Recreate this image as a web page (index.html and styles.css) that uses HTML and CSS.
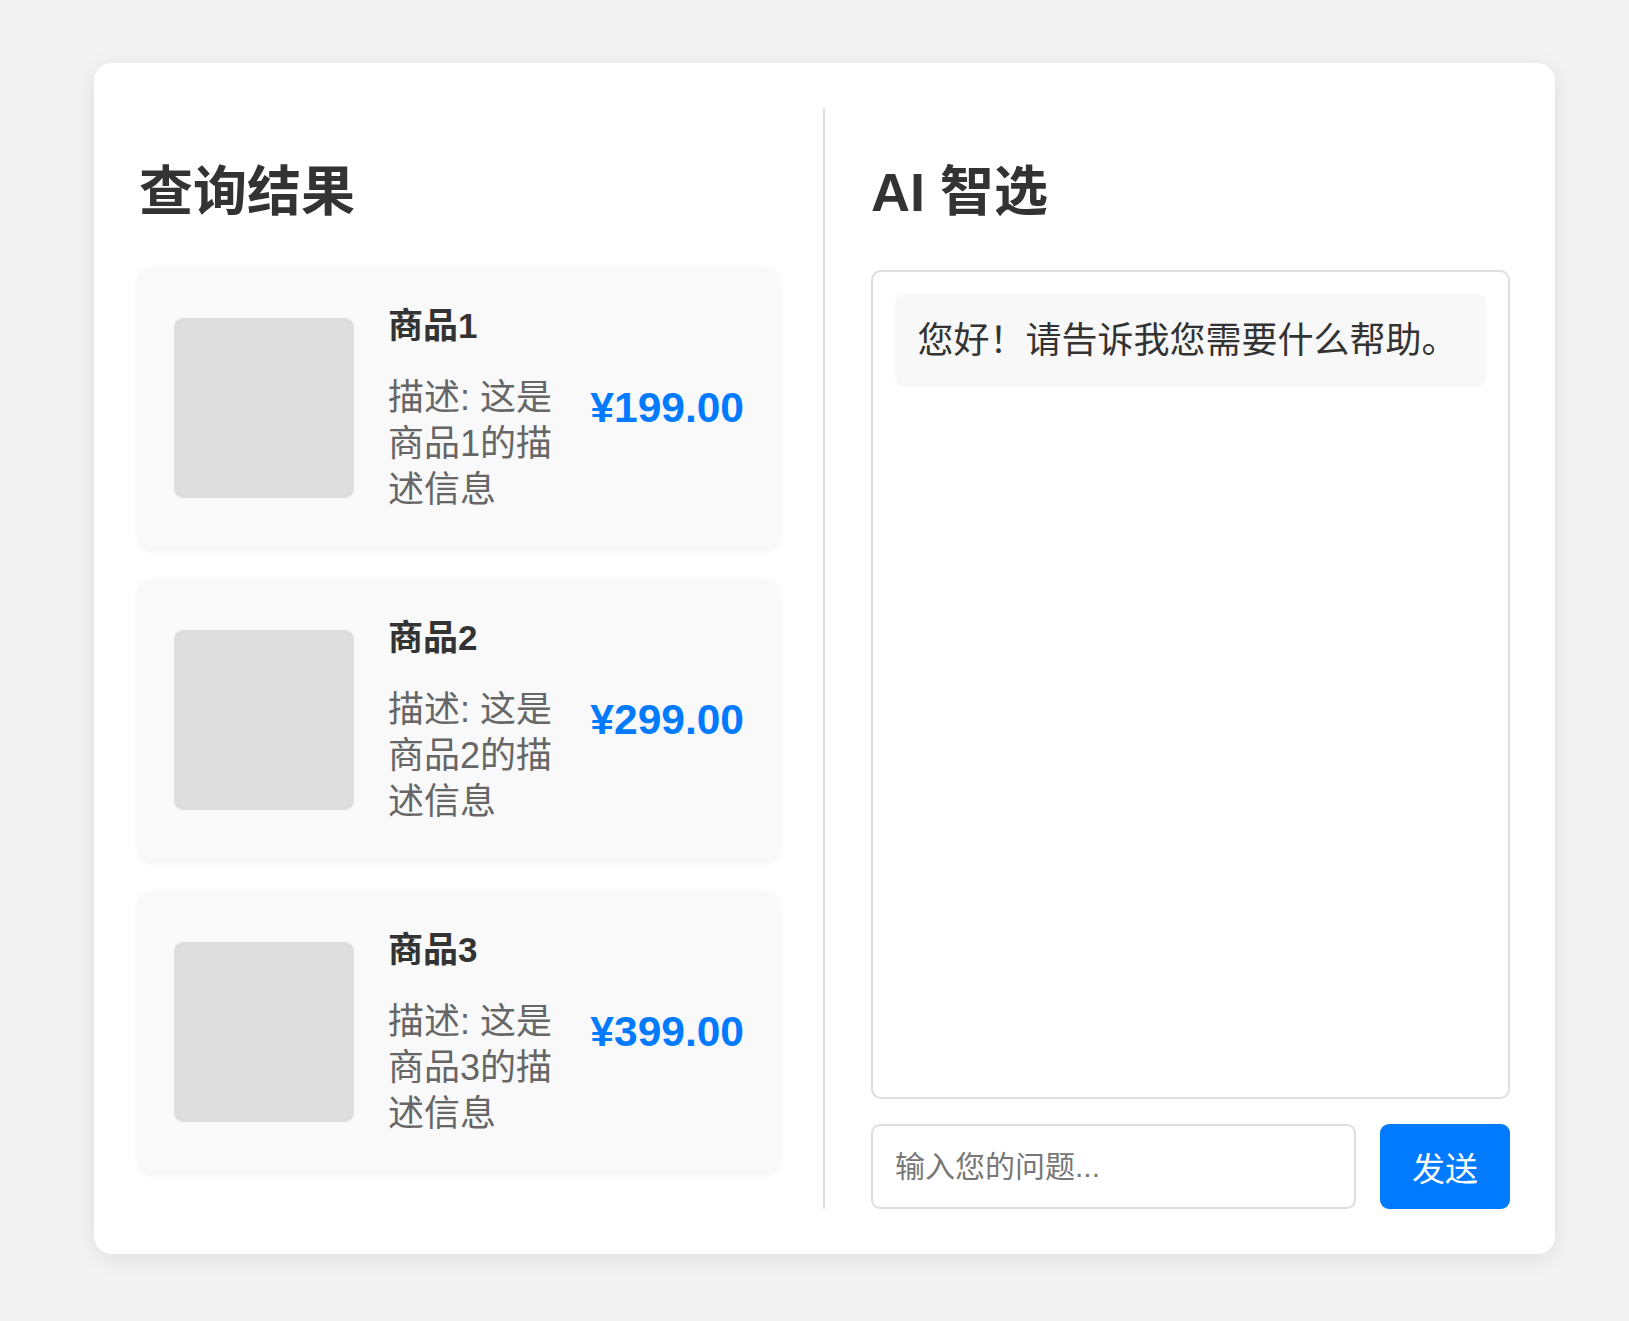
FILE: index.html
```html
<!DOCTYPE html>
<html lang="zh-CN">
<head>
<meta charset="utf-8">
<title>查询结果 - AI 智选</title>
<link rel="stylesheet" href="styles.css">
</head>
<body>
<main class="app">
  <section class="col results">
    <h2 class="title">查询结果</h2>
    <div class="list">
      <div class="product">
        <div class="thumb"></div>
        <div class="info">
          <h3 class="name">商品1</h3>
          <p class="desc">描述: 这是商品1的描述信息</p>
        </div>
        <div class="price">¥199.00</div>
      </div>
      <div class="product">
        <div class="thumb"></div>
        <div class="info">
          <h3 class="name">商品2</h3>
          <p class="desc">描述: 这是商品2的描述信息</p>
        </div>
        <div class="price">¥299.00</div>
      </div>
      <div class="product">
        <div class="thumb"></div>
        <div class="info">
          <h3 class="name">商品3</h3>
          <p class="desc">描述: 这是商品3的描述信息</p>
        </div>
        <div class="price">¥399.00</div>
      </div>
    </div>
  </section>
  <section class="col ai">
    <h2 class="title">AI 智选</h2>
    <div class="chat">
      <div class="bubble">您好！请告诉我您需要什么帮助。</div>
    </div>
    <div class="composer">
      <input class="ask" type="text" placeholder="输入您的问题...">
      <button class="send" type="button">发送</button>
    </div>
  </section>
</main>
</body>
</html>
```

FILE: styles.css
```css
* { box-sizing: border-box; }

html, body {
  margin: 0;
  padding: 0;
}

body {
  background: #f3f3f3;
  font-family: "Liberation Sans", "Noto Sans CJK SC", sans-serif;
  color: #333;
  padding: 63px 0 68px 94px;
}

.app {
  width: 1461px;
  background: #fff;
  border-radius: 18px;
  box-shadow: 0 4px 22px rgba(0, 0, 0, 0.09);
  padding: 45px;
  display: flex;
  align-items: stretch;
}

.col {
  flex: 1 1 0;
  min-width: 0;
  display: flex;
  flex-direction: column;
}

.results {
  padding-right: 45px;
  border-right: 2px solid #e0e0e0;
}

.ai {
  padding-left: 46px;
}

.title {
  margin: 48px 0 40px;
  font-size: 54px;
  line-height: 72px;
  font-weight: 700;
  color: #333;
}

.list {
  display: flex;
  flex-direction: column;
  gap: 32px;
  margin-bottom: 37px;
}

.product {
  display: flex;
  align-items: center;
  padding: 35px 34px 35px 35px;
  background: #f9f9f9;
  border-radius: 12px;
  box-shadow: 0 2px 8px rgba(0, 0, 0, 0.06);
}

.thumb {
  flex: 0 0 180px;
  width: 180px;
  height: 180px;
  background: #ddd;
  border-radius: 9px;
  margin-right: 34px;
}

.info {
  flex: 1 1 0;
  min-width: 0;
}

.name {
  margin: 0 0 26px;
  font-size: 35px;
  line-height: 46px;
  font-weight: 700;
  color: #333;
}

.desc {
  margin: 0;
  font-size: 36px;
  line-height: 46px;
  color: #666;
}

.price {
  flex: 0 0 auto;
  margin-left: 22px;
  font-size: 42.5px;
  font-weight: 700;
  color: #007bff;
}

.chat {
  flex: 1 1 auto;
  margin-top: 2px;
  border: 2px solid #dedede;
  border-radius: 10px;
  padding: 22px;
}

.bubble {
  background: #f8f8f8;
  border-radius: 10px;
  padding: 24px 22.5px 23px;
  font-size: 36px;
  line-height: 46px;
  color: #333;
}

.composer {
  display: flex;
  gap: 24px;
  margin-top: 25px;
  height: 85px;
}

.ask {
  flex: 1 1 auto;
  min-width: 0;
  height: 85px;
  border: 2px solid #dedede;
  border-radius: 9px;
  padding: 0 22px;
  font-family: "Liberation Sans", "Noto Sans CJK SC", sans-serif;
  font-size: 30px;
  color: #333;
  background: #fff;
  outline: none;
}

.ask::placeholder {
  color: #777;
}

.send {
  flex: 0 0 auto;
  height: 85px;
  padding: 0 32px;
  border: none;
  border-radius: 9px;
  background: #007bff;
  color: #fff;
  font-family: "Liberation Sans", "Noto Sans CJK SC", sans-serif;
  font-size: 33px;
  cursor: pointer;
}
```
